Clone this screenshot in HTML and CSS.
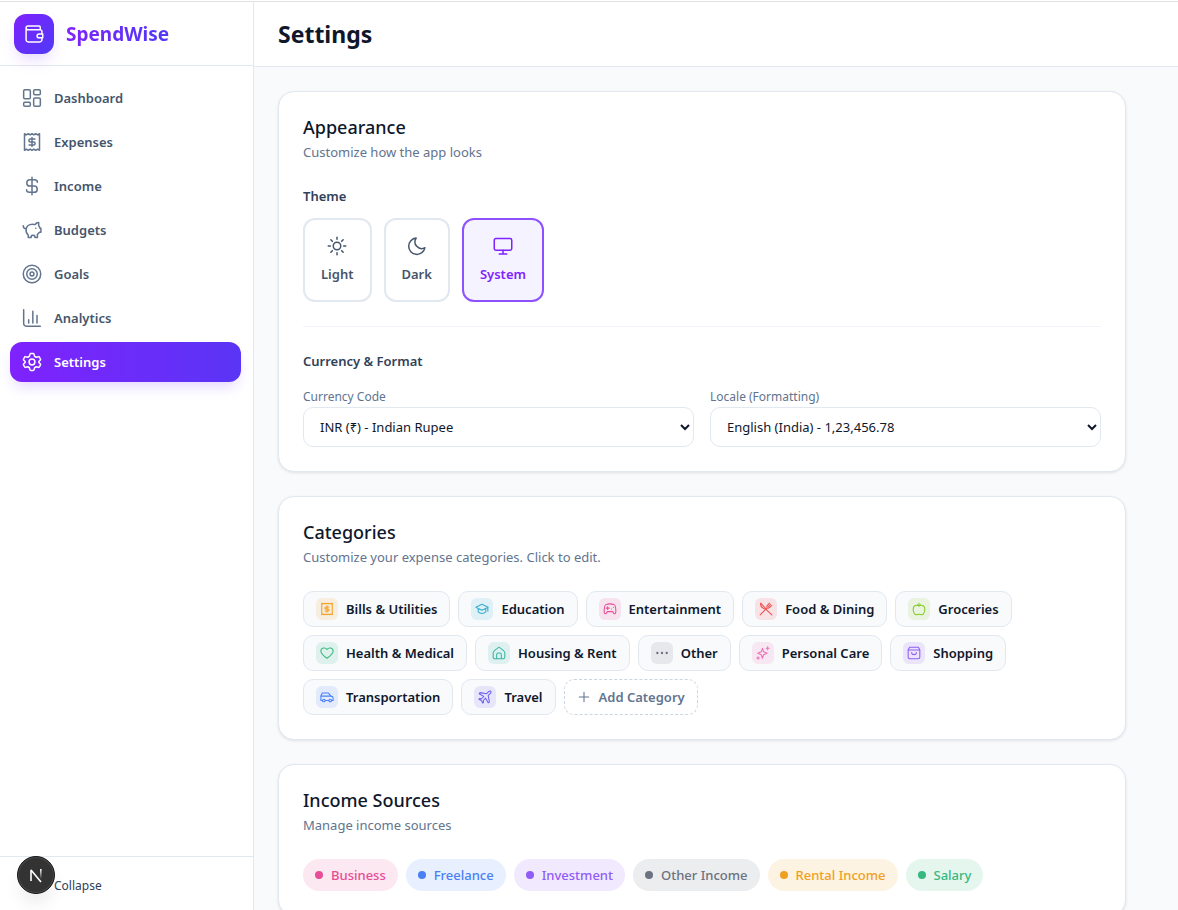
FILE: index.html
```
<!DOCTYPE html>
<html lang="en">
<head>
    <meta charset="UTF-8">
    <meta name="viewport" content="width=device-width, initial-scale=1.0">
    <title>Settings - SpendWise</title>
    <link rel="stylesheet" href="styles.css">
</head>
<body>

    <!-- Icon shapes, used below by id -->
    <svg class="icon-defs" aria-hidden="true">
        <symbol id="wallet" viewBox="0 0 24 24"><path d="M20 7H5a2.5 2.5 0 0 1-2.5-2.5a2 2 0 0 1 2-2H18A1.5 1.5 0 0 1 19.5 4v3M2.500 4.500V19A2.500 2.500 0 0 0 5 21.500h14a2.500 2.500 0 0 0 2.500-2.500v-2M21.500 11.500V9A2 2 0 0 0 19.500 7M22.500 12h-4.500a2.200 2.200 0 0 0 0 4.500h4.500z"/></symbol>
        <symbol id="dashboard" viewBox="0 0 24 24"><rect x="2" y="2" width="8" height="11" rx="1.5"/><rect x="14" y="2" width="8" height="6" rx="1.5"/><rect x="2" y="17" width="8" height="5" rx="1.5"/><rect x="14" y="12" width="8" height="10" rx="1.5"/></symbol>
        <symbol id="receipt" viewBox="0 0 24 24"><path d="M3 2l2.250 1.500L7.500 2l2.250 1.500L12 2l2.250 1.500L16.500 2l2.250 1.500L21 2v20l-2.250-1.500L16.500 22l-2.250-1.500L12 22l-2.250-1.500L7.500 22l-2.250-1.500L3 22zM15.500 8.500H10a1.700 1.700 0 0 0 0 3.500h4a1.700 1.700 0 0 1 0 3.500H8.500M12 6.500v11"/></symbol>
        <symbol id="dollar" viewBox="0 0 24 24"><path d="M12 1.500v21M18.500 7.500c0-2-1.500-3-4-3h-5a3.700 3.700 0 0 0 0 7.500h5a3.700 3.700 0 0 1 0 7.500H9c-2.500 0-3.500-1-3.500-3"/></symbol>
        <symbol id="piggy" viewBox="0 0 24 24"><path d="M1.500 7c0 2.500 1 3.500 3.500 3.500M5 11c.4-3.500 3.500-6 7.500-6 1.200 0 2.300.1 3.200.5C16.500 4 18 3 20 3v4c.8.800 1.300 1.700 1.500 2.800h1.200v5h-2c-.5 1-1.200 1.800-2.200 2.400V21h-3v-1.500c-.5-1.500-4-1.500-4.500 0V21H7.500v-3C5.500 16.500 4.600 13.500 5 11zM16.500 10h.1"/></symbol>
        <symbol id="target" viewBox="0 0 24 24"><circle cx="12" cy="12" r="10.5"/><circle cx="12" cy="12" r="6.3"/><circle cx="12" cy="12" r="2.3"/></symbol>
        <symbol id="chart" viewBox="0 0 24 24"><path d="M2 2v16.500A3.500 3.500 0 0 0 5.500 22H22M8 14v4M13 4v14M18 9v9"/></symbol>
        <symbol id="gear" viewBox="0 0 24 24"><path d="M10.500 1.800h3q.7 0 .9.700l.7 2.600 2 1.200 2.700-.7q.7-.2 1 .4l1.400 2.500q.4.600-.1 1.100L20.200 11.500v1l1.900 1.900q.5.500.1 1.100l-1.400 2.500q-.3.600-1 .4l-2.700-.7-2 1.200-.7 2.600q-.2.700-.9.700h-3q-.7 0-.9-.7l-.7-2.600-2-1.200-2.700.7q-.7.200-1-.4l-1.400-2.500q-.4-.600.1-1.100l1.900-1.900v-1L1.900 9.600q-.5-.5-.1-1.100L3.200 6q.3-.6 1-.4l2.700.7 2-1.200.7-2.600q.2-.7.900-.7z"/><circle cx="12" cy="12" r="3.5"/></symbol>
        <symbol id="sun" viewBox="0 0 24 24"><circle cx="12" cy="12" r="4.5"/><path d="M12 1.500V4M12 20v2.500M1.500 12H4M20 12h2.500M4.600 4.600l1.800 1.800M17.600 17.600l1.800 1.800M4.600 19.400l1.800-1.800M17.600 6.400l1.800-1.800"/></symbol>
        <symbol id="moon" viewBox="0 0 24 24"><path d="M21.500 14A8 8 0 0 1 11 2.500 9.800 9.800 0 1 0 21.500 14z"/></symbol>
        <symbol id="monitor" viewBox="0 0 24 24"><rect x="1.5" y="3" width="21" height="14" rx="2"/><path d="M12 17v4M7.500 21.500h9"/></symbol>
        <symbol id="cap" viewBox="0 0 24 24"><path d="M1.500 9L12 4l10.500 5L12 14zM5.500 11v6c3.500 3.500 9.500 3.500 13 0v-6M22 9.500V16"/></symbol>
        <symbol id="gamepad" viewBox="0 0 24 24"><path d="M5 4.500c4-1.500 10-1.500 14 0 2 .8 3 5 3 12 0 4-3 4.500-4 2.500l-1.500-2.500h-9L6 19c-1 2-4 1.500-4-2.500 0-7 1-11.200 3-12zM8 8v5M5.500 10.500h5M14.500 12h.1M18 9h.1"/></symbol>
        <symbol id="cutlery" viewBox="0 0 24 24"><path d="M3 2c-1 4 2 8 7 10l2 .5L22 22M3 2l9.500 10M2 22l12-12M14 10c-1.500-2 0-4 1.500-5.500L18 2M14 10c2 1.500 4 0 5.500-1.500L22 6M20 4l-4 4"/></symbol>
        <symbol id="apple" viewBox="0 0 24 24"><path d="M12 7c-2-2-10-2.500-10 5.500 0 5 2.500 9.500 5.500 9.500 1.500 0 3-1 4.500-1s3 1 4.500 1c3 0 5.500-4.500 5.500-9.500C22 4.500 14 5 12 7zM12 7V2M9 4.500l3 2.500 3-2.500"/></symbol>
        <symbol id="heart" viewBox="0 0 24 24"><path d="M12 21C7 17.500 1.500 13.500 1.500 8.500c0-5.500 7.500-7 10.500-2.500 3-4.500 10.500-3 10.500 2.500 0 5-5.500 9-10.500 12.500z"/></symbol>
        <symbol id="house" viewBox="0 0 24 24"><path d="M2 11.500C2 9 12 2 12 2s10 7 10 9.500V19a3 3 0 0 1-3 3H5a3 3 0 0 1-3-3zM8 22v-7a3 3 0 0 1 3-3h2a3 3 0 0 1 3 3v7"/></symbol>
        <symbol id="dots" viewBox="0 0 24 24"><path class="thick" d="M4 12h.1M12 12h.1M20 12h.1"/></symbol>
        <symbol id="sparkles" viewBox="0 0 24 24"><path d="M11 4l2 6 6 2.500-6 2.500-2 6-2-6-6-2.500L9 10zM20 1.500v5M17.500 4h5"/><circle cx="3.5" cy="20.5" r="1.8"/></symbol>
        <symbol id="bag" viewBox="0 0 24 24"><path d="M2 6.500L4.500 2h15L22 6.500V19a3 3 0 0 1-3 3H5a3 3 0 0 1-3-3zM2 7h20M8 11c0 5 8 5 8 0"/></symbol>
        <symbol id="car" viewBox="0 0 24 24"><path d="M4 18H1.500v-8L4 5h10l5 5.500c2.500.2 3.500 1.500 3.500 3.500v4H20M9 18h6M2 10.500h17"/><circle cx="6.5" cy="18" r="2.3"/><circle cx="17.5" cy="18" r="2.3"/></symbol>
        <symbol id="plane" viewBox="0 0 24 24"><path d="M22 2c-2-1-4 .5-6 3l-1.500 1.500-11-2L2 6.500l8 4.500-4 4-3.500-.500L1.500 16 6 18l2 4.500 1.500-1L9 18l4-4 4.500 8 2-1.500-2-11L19 8c2.500-2 4-4 3-6z"/></symbol>
        <symbol id="plus" viewBox="0 0 24 24"><path d="M12 4v16M4 12h16"/></symbol>
    </svg>

    <div class="app">
        <!-- Sidebar -->
        <aside class="sidebar">
            <div class="brand">
                <span class="logo"><svg class="icon"><use href="#wallet"/></svg></span>
                <span class="brand-name">SpendWise</span>
            </div>

            <nav class="nav">
                <a class="nav-link" href="#"><svg class="icon"><use href="#dashboard"/></svg>Dashboard</a>
                <a class="nav-link" href="#"><svg class="icon"><use href="#receipt"/></svg>Expenses</a>
                <a class="nav-link" href="#"><svg class="icon"><use href="#dollar"/></svg>Income</a>
                <a class="nav-link" href="#"><svg class="icon"><use href="#piggy"/></svg>Budgets</a>
                <a class="nav-link" href="#"><svg class="icon"><use href="#target"/></svg>Goals</a>
                <a class="nav-link" href="#"><svg class="icon"><use href="#chart"/></svg>Analytics</a>
                <a class="nav-link active" href="#" aria-current="page"><svg class="icon"><use href="#gear"/></svg>Settings</a>
            </nav>

            <div class="sidebar-footer">
                <button class="collapse" type="button">Collapse</button>
            </div>
        </aside>

        <div class="page">
            <header class="topbar">
                <h1>Settings</h1>
            </header>

            <main class="content">
                <!-- Appearance -->
                <section class="card">
                    <h2>Appearance</h2>
                    <p class="subtitle">Customize how the app looks</p>

                    <h3>Theme</h3>
                    <div class="themes">
                        <button class="theme" type="button"><svg class="icon"><use href="#sun"/></svg>Light</button>
                        <button class="theme" type="button"><svg class="icon"><use href="#moon"/></svg>Dark</button>
                        <button class="theme selected" type="button"><svg class="icon"><use href="#monitor"/></svg>System</button>
                    </div>

                    <div class="format">
                        <h3>Currency &amp; Format</h3>
                        <div class="fields">
                            <div class="field">
                                <label for="currency">Currency Code</label>
                                <select id="currency">
                                    <option>INR (₹) - Indian Rupee</option>
                                </select>
                            </div>
                            <div class="field">
                                <label for="locale">Locale (Formatting)</label>
                                <select id="locale">
                                    <option>English (India) - 1,23,456.78</option>
                                </select>
                            </div>
                        </div>
                    </div>
                </section>

                <!-- Categories -->
                <section class="card">
                    <h2>Categories</h2>
                    <p class="subtitle">Customize your expense categories. Click to edit.</p>

                    <div class="chips">
                        <button class="chip amber" type="button"><span class="chip-icon"><svg class="icon"><use href="#receipt"/></svg></span>Bills &amp; Utilities</button>
                        <button class="chip cyan" type="button"><span class="chip-icon"><svg class="icon"><use href="#cap"/></svg></span>Education</button>
                        <button class="chip pink" type="button"><span class="chip-icon"><svg class="icon"><use href="#gamepad"/></svg></span>Entertainment</button>
                        <button class="chip red" type="button"><span class="chip-icon"><svg class="icon"><use href="#cutlery"/></svg></span>Food &amp; Dining</button>
                        <button class="chip lime" type="button"><span class="chip-icon"><svg class="icon"><use href="#apple"/></svg></span>Groceries</button>
                        <button class="chip green" type="button"><span class="chip-icon"><svg class="icon"><use href="#heart"/></svg></span>Health &amp; Medical</button>
                        <button class="chip teal" type="button"><span class="chip-icon"><svg class="icon"><use href="#house"/></svg></span>Housing &amp; Rent</button>
                        <button class="chip gray" type="button"><span class="chip-icon"><svg class="icon"><use href="#dots"/></svg></span>Other</button>
                        <button class="chip rose" type="button"><span class="chip-icon"><svg class="icon"><use href="#sparkles"/></svg></span>Personal Care</button>
                        <button class="chip violet" type="button"><span class="chip-icon"><svg class="icon"><use href="#bag"/></svg></span>Shopping</button>
                        <button class="chip blue" type="button"><span class="chip-icon"><svg class="icon"><use href="#car"/></svg></span>Transportation</button>
                        <button class="chip indigo" type="button"><span class="chip-icon"><svg class="icon"><use href="#plane"/></svg></span>Travel</button>
                        <button class="chip add" type="button"><svg class="icon"><use href="#plus"/></svg>Add Category</button>
                    </div>
                </section>

                <!-- Income sources -->
                <section class="card">
                    <h2>Income Sources</h2>
                    <p class="subtitle">Manage income sources</p>

                    <div class="chips">
                        <button class="pill pink" type="button">Business</button>
                        <button class="pill blue" type="button">Freelance</button>
                        <button class="pill violet" type="button">Investment</button>
                        <button class="pill gray" type="button">Other Income</button>
                        <button class="pill amber" type="button">Rental Income</button>
                        <button class="pill green" type="button">Salary</button>
                    </div>
                </section>
            </main>
        </div>
    </div>

    <!-- Floating dev tools badge -->
    <button class="dev-badge" type="button" aria-label="Open dev tools">
        <svg class="dev-mark" viewBox="0 0 20 20">
            <defs>
                <linearGradient id="fade" x1="0" y1="0" x2="0" y2="1">
                    <stop offset="0" stop-color="#fff"/>
                    <stop offset="1" stop-color="#fff" stop-opacity="0"/>
                </linearGradient>
            </defs>
            <path d="M5 16V5l10 12" fill="none" stroke="#fff" stroke-width="1.6" stroke-linejoin="bevel"/>
            <rect x="14" y="4" width="1.6" height="10" fill="url(#fade)"/>
        </svg>
    </button>

</body>
</html>
```
FILE: styles.css
```
* {
    box-sizing: border-box;
}

body {
    margin: 0;
    padding-top: 1px;
    height: 100vh;
    overflow: hidden;
    font-family: "Segoe UI", "Noto Sans", "Open Sans", sans-serif;
    font-size: 13px;
    line-height: 20px;
    color: #0f172b;
    background: #fff;
}

h1, h2, h3, p {
    margin: 0;
}

button, select {
    font: inherit;
    color: inherit;
}

button {
    cursor: pointer;
}

.icon-defs {
    display: none;
}

.icon {
    width: 20px;
    height: 20px;
    flex-shrink: 0;
    fill: none;
    stroke: currentColor;
    stroke-width: 1.8;
    stroke-linecap: round;
    stroke-linejoin: round;
}

.thick {
    stroke-width: 4;
}

.app {
    display: flex;
    height: 100%;
    border-top: 1px solid #e0e2e6;
}

/* Sidebar */
.sidebar {
    width: 254px;
    flex-shrink: 0;
    display: flex;
    flex-direction: column;
    border-right: 1px solid #e2e8f0;
}

.brand {
    display: flex;
    align-items: center;
    gap: 12px;
    height: 64px;
    padding: 0 14px;
    border-bottom: 1px solid #e2e8f0;
}

.logo {
    display: flex;
    align-items: center;
    justify-content: center;
    width: 40px;
    height: 40px;
    border-radius: 12px;
    color: #fff;
    background: linear-gradient(135deg, #7f22fe, #4f39f6);
    box-shadow: 0 8px 16px -4px rgba(142, 81, 255, 0.25);
}

.brand-name {
    font-size: 19px;
    font-weight: 700;
    line-height: 28px;
    color: transparent;
    background: linear-gradient(to right, #7f22fe, #4f39f6);
    background-clip: text;
    -webkit-background-clip: text;
}

.nav {
    flex: 1;
    display: flex;
    flex-direction: column;
    gap: 4px;
    padding: 12px 12px 12px 10px;
}

.nav-link {
    display: flex;
    align-items: center;
    gap: 12px;
    padding: 10px 12px;
    border-radius: 12px;
    font-weight: 600;
    color: #45556c;
    text-decoration: none;
}

.nav-link .icon {
    color: #62748e;
}

.nav-link.active {
    color: #fff;
    background: linear-gradient(to right, #7f22fe, #5a35f5);
    box-shadow: 0 8px 14px -4px rgba(142, 81, 255, 0.25);
}

.nav-link.active .icon {
    color: #fff;
}

.sidebar-footer {
    padding: 15px 12px 10px;
    border-top: 1px solid #e2e8f0;
}

.collapse {
    width: 100%;
    padding: 4px 42px;
    border: 0;
    background: none;
    font-size: 12px;
    text-align: left;
    color: #314158;
}

/* Main column */
.page {
    flex: 1;
    min-width: 0;
    display: flex;
    flex-direction: column;
    background: #f8fafc;
}

.topbar {
    display: flex;
    align-items: center;
    flex-shrink: 0;
    height: 65px;
    padding: 0 24px;
    background: #fff;
    border-bottom: 1px solid #e2e8f0;
}

h1 {
    font-size: 23px;
    font-weight: 700;
    line-height: 32px;
}

.content {
    flex: 1;
    min-height: 0;
    display: flex;
    flex-direction: column;
    gap: 24px;
    max-width: 896px;
    padding: 24px;
    overflow-y: auto;
    scrollbar-width: none;
}

.card {
    flex-shrink: 0;
    padding: 24px;
    background: #fff;
    border: 1px solid #e2e8f0;
    border-radius: 16px;
    box-shadow: 0 1px 3px rgba(0, 0, 0, 0.1);
}

h2 {
    margin-bottom: 4px;
    font-size: 18px;
    font-weight: 500;
    line-height: 22px;
}

.subtitle {
    margin-bottom: 24px;
    color: #62748e;
}

h3 {
    font-size: 13px;
    font-weight: 600;
    color: #314158;
}

.themes {
    display: flex;
    gap: 12px;
    margin: 12px 0 24px;
}

.theme {
    display: flex;
    flex-direction: column;
    align-items: center;
    gap: 8px;
    padding: 16px;
    border: 2px solid #e2e8f0;
    border-radius: 12px;
    background: #fff;
    font-weight: 600;
    color: #45556c;
}

.theme.selected {
    border-color: #8e51ff;
    background: #f5f3ff;
    color: #7f22fe;
}

.format {
    padding-top: 24px;
    border-top: 1px solid #f1f5f9;
}

.fields {
    display: grid;
    grid-template-columns: 1fr 1fr;
    gap: 16px;
    margin-top: 16px;
}

.field label {
    display: block;
    font-size: 12px;
    color: #62748e;
}

.field select {
    width: 100%;
    height: 40px;
    padding: 0 12px;
    border: 1px solid #e2e8f0;
    border-radius: 10px;
    background: #fff;
}

/* Categories and income sources */
.chips {
    display: flex;
    flex-wrap: wrap;
    gap: 8px;
}

.chip {
    display: flex;
    align-items: center;
    gap: 8px;
    height: 36px;
    padding: 0 12px;
    border: 1px solid #e2e8f0;
    border-radius: 10px;
    background: #f8fafc;
    font-weight: 600;
}

.chip .icon {
    width: 14px;
    height: 14px;
}

.chip-icon {
    display: flex;
    align-items: center;
    justify-content: center;
    width: 22px;
    height: 22px;
    border-radius: 6px;
    color: var(--tone);
    background: color-mix(in srgb, var(--tone) 13%, transparent);
}

.chip.add {
    border: 1px dashed #cad5e2;
    background: none;
    color: #62748e;
}

.pill {
    display: flex;
    align-items: center;
    gap: 8px;
    height: 32px;
    padding: 0 12px;
    border: 0;
    border-radius: 16px;
    font-weight: 500;
    color: var(--tone);
    background: color-mix(in srgb, var(--tone) 13%, transparent);
}

.pill::before {
    content: "";
    width: 8px;
    height: 8px;
    border-radius: 50%;
    background: currentColor;
}

.amber { --tone: #f0a020; }
.cyan { --tone: #35b0d0; }
.pink { --tone: #e84c96; }
.red { --tone: #ef5050; }
.lime { --tone: #84cc28; }
.green { --tone: #36b980; }
.teal { --tone: #35b5a0; }
.gray { --tone: #6b7280; }
.rose { --tone: #f06db5; }
.violet { --tone: #8f5cf6; }
.blue { --tone: #4a80f5; }
.indigo { --tone: #6d60ee; }

/* Dev tools badge, floats over the sidebar footer */
.dev-badge {
    position: absolute;
    left: 17px;
    bottom: 16px;
    display: flex;
    align-items: center;
    justify-content: center;
    width: 38px;
    height: 38px;
    padding: 0;
    border: 1px solid #171717;
    border-radius: 50%;
    background: #333;
    box-shadow: inset 0 0 0 1px #4a4a4a, 0 12px 20px -6px rgba(0, 0, 0, 0.12);
}

.dev-mark {
    width: 20px;
    height: 20px;
}
```
